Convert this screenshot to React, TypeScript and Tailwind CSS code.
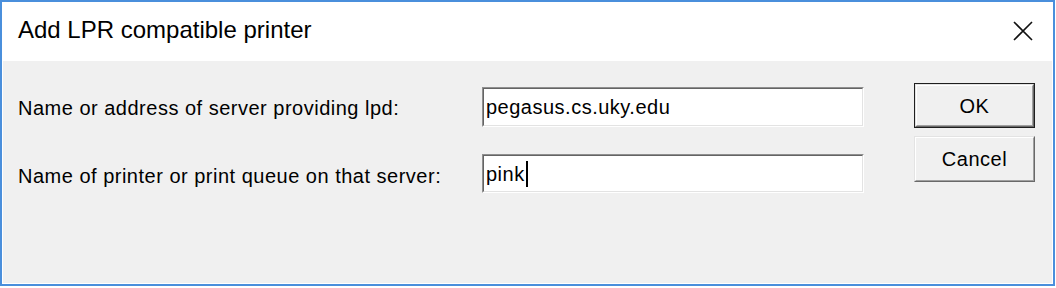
/*
 * Add LPR compatible printer — classic Windows dialog
 */

const FONT = "font-['Liberation_Sans',Arial,sans-serif]";

function Field({ value, caret }: { value: string; caret?: boolean }) {
  return (
    <div className="h-full border border-t-[#8f8f8f] border-l-[#8f8f8f] border-b-white border-r-white">
      <div className="h-full border border-t-[#646464] border-l-[#646464] border-b-[#e3e3e3] border-r-[#e3e3e3] bg-white flex items-center pl-[2px]">
        <span className="text-[20px] tracking-[0.5px] text-black leading-none">{value}</span>
        {caret && <span className="w-[2px] h-[26px] bg-black ml-[1px]" />}
      </div>
    </div>
  );
}

function Button({ label, isDefault, h }: { label: string; isDefault?: boolean; h: string }) {
  const face = (
    <div className="h-full border border-t-[#e3e3e3] border-l-[#e3e3e3] border-b-[#696969] border-r-[#696969]">
      <div className="h-full border border-t-white border-l-white border-b-[#a0a0a0] border-r-[#a0a0a0] bg-[#f0f0f0] flex items-center justify-center">
        <span className="text-[20px] tracking-[0.5px] text-black leading-none">{label}</span>
      </div>
    </div>
  );
  return (
    <div className={`w-[121px] ${h}`}>
      {isDefault ? <div className="h-full border border-[#1e1e1e]">{face}</div> : face}
    </div>
  );
}

export default function App() {
  return (
    <div className={`w-[1056px] h-[288px] bg-white overflow-hidden ${FONT}`}>
      <div className="w-[1055px] h-[286px] border-2 border-[#4a8fdc]">
        <div className="h-full border border-white flex flex-col">
          {/* Title bar */}
          <div className="h-[58px] bg-white flex items-center justify-between pl-[15px] pr-[19px] pb-[4px]">
            <span className="text-[24px] text-black leading-none">Add LPR compatible printer</span>
            <svg width="20" height="20" viewBox="0 0 20 20" className="mt-[2px]">
              <path d="M1 1 L19 19 M19 1 L1 19" stroke="#111" strokeWidth="1.6" fill="none" />
            </svg>
          </div>

          {/* Body */}
          <div className="flex-1 bg-[#f0f0f0] flex pt-[22px] pl-[15px]">
            <div className="mt-[4px] grid grid-cols-[464px_382px] grid-rows-[40px_39px] gap-y-[27px] text-[20px] tracking-[0.5px] text-black">
              <div className="flex items-center pt-[2px]">Name or address of server providing lpd:</div>
              <Field value="pegasus.cs.uky.edu" />
              <div className="flex items-center pt-[4px]">Name of printer or print queue on that server:</div>
              <Field value="pink" caret />
            </div>
            <div className="ml-[50px] flex flex-col gap-[8px]">
              <Button label="OK" isDefault h="h-[45px]" />
              <Button label="Cancel" h="h-[46px]" />
            </div>
          </div>
        </div>
      </div>
    </div>
  );
}
